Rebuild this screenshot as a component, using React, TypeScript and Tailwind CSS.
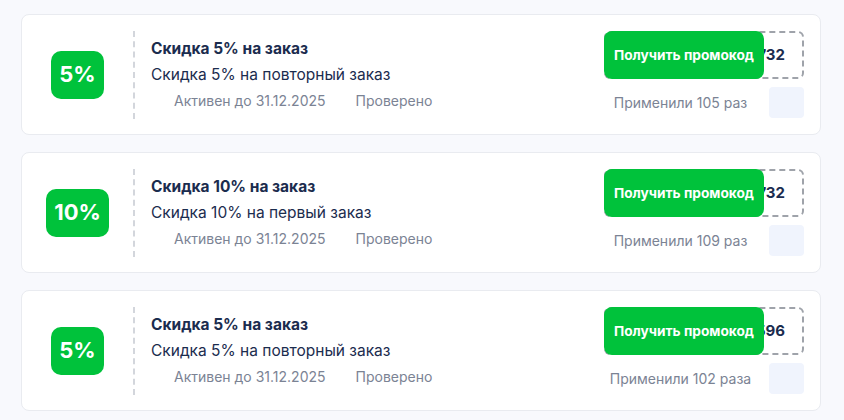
import React from 'react';

type Promo = {
  badge: string;
  title: string;
  subtitle: string;
  until: string;
  code: string;
  used: string;
};

const promos: Promo[] = [
  { badge: '5%', title: 'Скидка 5% на заказ', subtitle: 'Скидка 5% на повторный заказ', until: '31.12.2025', code: 'SALE5732', used: 'Применили 105 раз' },
  { badge: '10%', title: 'Скидка 10% на заказ', subtitle: 'Скидка 10% на первый заказ', until: '31.12.2025', code: 'FIRST10732', used: 'Применили 109 раз' },
  { badge: '5%', title: 'Скидка 5% на заказ', subtitle: 'Скидка 5% на повторный заказ', until: '31.12.2025', code: 'SALE5596', used: 'Применили 102 раза' },
];

function PromoCard({ promo }: { promo: Promo }) {
  return (
    <div className="h-[121px] bg-white border border-[#e9ebf0] rounded-lg flex items-center pr-4">
      {/* Badge */}
      <div className="w-[111px] shrink-0 flex items-center justify-center">
        <div className="h-12 min-w-[52px] px-2 rounded-[10px] bg-[#00c23b] text-white text-[22px] font-bold flex items-center justify-center">
          {promo.badge}
        </div>
      </div>

      {/* Divider */}
      <div className="h-[88px] border-l-2 border-dashed border-[#d3d6dc]" />

      {/* Info */}
      <div className="flex-1 pl-[16px] flex flex-col text-[#1b2c4e]">
        <div className="text-[15.5px] font-bold leading-[26px]">{promo.title}</div>
        <div className="text-[15.5px] leading-[26px]">{promo.subtitle}</div>
        <div className="flex items-center text-[14px] leading-[26px] text-[#7b8394] pl-[23px] gap-[30px]">
          <span>Активен до {promo.until}</span>
          <span>Проверено</span>
        </div>
      </div>

      {/* Action */}
      <div className="w-[200px] shrink-0 flex flex-col gap-2">
        <div className="relative h-12">
          <div className="h-12 border-2 border-dashed border-[#9fa3aa] rounded-md flex items-center justify-end pr-[17px] overflow-hidden">
            <span className="text-[15px] font-bold text-[#1b2c4e] whitespace-nowrap">{promo.code}</span>
          </div>
          <button className="absolute left-0 top-0 h-12 w-40 rounded-lg bg-[#00c23b] text-white text-[13.7px] font-bold">
            Получить промокод
          </button>
        </div>
        <div className="flex items-center gap-3">
          <span className="flex-1 text-center text-[14px] text-[#7b8394]">{promo.used}</span>
          <div className="w-[35px] h-[31px] rounded bg-[#f0f4fd]" />
        </div>
      </div>
    </div>
  );
}

export default function App() {
  return (
    <div className="w-[844px] h-[420px] bg-[#f8f9fd] pt-[14px] pl-[21px] pr-[23px] flex flex-col gap-[17px] font-['Inter',sans-serif] overflow-hidden">
      {promos.map((p, i) => (
        <PromoCard key={i} promo={p} />
      ))}
    </div>
  );
}
